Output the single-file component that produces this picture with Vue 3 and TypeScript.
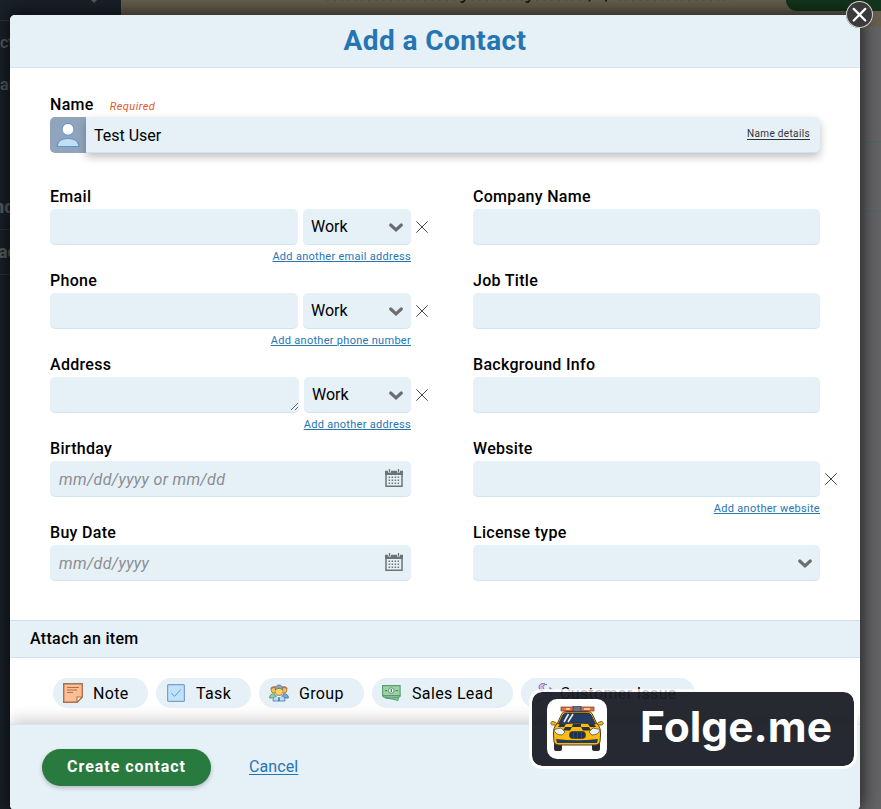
<script setup lang="ts">
interface Field {
  label: string
  kind: 'typed' | 'area' | 'text' | 'date' | 'select'
  placeholder?: string
  link?: string
  removable?: boolean
}

const leftFields: Field[] = [
  { label: 'Email', kind: 'typed', link: 'Add another email address', removable: true },
  { label: 'Phone', kind: 'typed', link: 'Add another phone number', removable: true },
  { label: 'Address', kind: 'area', link: 'Add another address', removable: true },
  { label: 'Birthday', kind: 'date', placeholder: 'mm/dd/yyyy or mm/dd' },
  { label: 'Buy Date', kind: 'date', placeholder: 'mm/dd/yyyy' },
]

const rightFields: Field[] = [
  { label: 'Company Name', kind: 'text' },
  { label: 'Job Title', kind: 'text' },
  { label: 'Background Info', kind: 'text' },
  { label: 'Website', kind: 'text', link: 'Add another website', removable: true },
  { label: 'License type', kind: 'select' },
]

const columns = [leftFields, rightFields]

const chips = [
  { id: 'note', label: 'Note' },
  { id: 'task', label: 'Task' },
  { id: 'group', label: 'Group' },
  { id: 'lead', label: 'Sales Lead' },
  { id: 'issue', label: 'Customer Issue' },
]

const dots = [0, 1, 2, 3].flatMap((c) => [0, 1, 2].map((r) => ({ x: 4 + c * 3, y: 7.5 + r * 3 })))
</script>

<template>
  <div class="page">
    <div class="backdrop">
      <aside class="side">
        <div class="side-top">
          <svg width="10" height="4" viewBox="0 0 10 4"><path d="M2 0L5 3L8 0Z" fill="#55595e" /></svg>
        </div>
        <div class="side-row r1">ct</div>
        <div class="side-row r2">ar</div>
        <div class="side-row r3">nd</div>
        <div class="side-row r4">ac</div>
      </aside>
      <main class="main">
        <div class="banner">
          <svg class="scraps" width="400" height="5" viewBox="0 0 400 5" fill="none" stroke="#15150f" stroke-width="1.7">
            <path d="M79 0L77 2.200L74.500 2M144 0L142 2.200L139.500 2M203.500 0V1.500M220.500 0L219.500 1.500" />
            <path d="M-60 0H70M85 0H138M150 0H200M232 0H345" stroke="#4c493c" stroke-width=".8" stroke-dasharray="3 4" />
          </svg>
          <div class="green"></div>
        </div>
        <div class="line l1"></div>
        <div class="line l2"></div>
      </main>
    </div>

    <section class="modal">
      <header class="head"><h1>Add a Contact</h1></header>
      <div class="body">
        <div class="name-label"><label>Name</label><em>Required</em></div>
        <div class="name-row">
          <div class="avatar">
            <svg width="36" height="36" viewBox="0 0 36 36">
              <circle cx="18" cy="12.300" r="5.900" fill="#fff" stroke="#5e93cd" stroke-width="1" />
              <path d="M7 29.500C7.500 24 12 21.500 18 21.500S28.500 24 29.200 29.500Z" fill="#c3e0f3" stroke="#5e93cd" stroke-width="1.200" />
            </svg>
          </div>
          <div class="name-box"><span>Test User</span><a>Name details</a></div>
        </div>

        <div class="grid">
          <div v-for="(col, ci) in columns" :key="ci" class="col">
            <div v-for="f in col" :key="f.label" class="field">
              <label>{{ f.label }}</label>
              <div class="row">
                <template v-if="f.kind === 'typed' || f.kind === 'area'">
                  <div class="box grow">
                    <svg v-if="f.kind === 'area'" class="grip" width="9" height="9" viewBox="0 0 9 9">
                      <path d="M1 8L8 1M5 8L8 5" stroke="#444" stroke-width=".8" />
                    </svg>
                  </div>
                  <div class="box type" :class="{ narrow: f.kind === 'area' }">
                    <span>Work</span>
                    <svg width="14" height="10" viewBox="0 0 14 10"><path d="M1.700 2L7 6.800L12.300 2" fill="none" stroke="#6b6c6f" stroke-width="3.100" stroke-linecap="round" /></svg>
                  </div>
                </template>
                <div v-else class="box grow" :class="f.kind">
                  <i v-if="f.placeholder">{{ f.placeholder }}</i>
                  <svg v-if="f.kind === 'date'" class="cal" width="18" height="18" viewBox="0 0 18 18">
                    <path d="M1 2.500V17.200H17V2.500" fill="none" stroke="#6d7479" stroke-width="1.500" />
                    <path d="M0 1.800H3V3.600H6V1.800H12V3.600H15V1.800H18V6H0Z" fill="#6d7479" />
                    <path d="M4.500 0V3M13.500 0V3" stroke="#6d7479" stroke-width="1.300" />
                    <rect v-for="(d, i) in dots" :key="i" :x="d.x - .4" :y="d.y" width="1.500" height="1.500" fill="#6d7479" />
                  </svg>
                  <svg v-if="f.kind === 'select'" class="chev" width="14" height="10" viewBox="0 0 14 10"><path d="M1.700 2L7 6.800L12.300 2" fill="none" stroke="#6b6c6f" stroke-width="3.100" stroke-linecap="round" /></svg>
                </div>
                <svg v-if="f.removable" class="remove" width="12" height="12" viewBox="0 0 12 12">
                  <path d="M.3 .3L11.700 11.700M11.700 .3L.3 11.700" stroke="#484848" stroke-width="1" />
                </svg>
              </div>
              <a v-if="f.link">{{ f.link }}</a>
            </div>
          </div>
        </div>
      </div>

      <div class="attach">Attach an item</div>
      <div class="chips">
        <div v-for="c in chips" :key="c.id" class="chip" :class="c.id">
          <svg v-if="c.id === 'note'" width="20" height="20" viewBox="0 0 20 20">
            <path d="M.7 .7H19.300V14L14 19.300H.7Z" fill="#ffbd94" stroke="#a9714f" stroke-width="1.400" />
            <path d="M19.300 14H14V19.300Z" fill="#fff0e6" stroke="#a9714f" stroke-width="1.100" />
            <path d="M4 4.500H16M4 7H14M4 9.500H10" stroke="#a9714f" stroke-width="1.100" />
          </svg>
          <svg v-else-if="c.id === 'task'" width="18" height="18" viewBox="0 0 18 18">
            <rect x=".6" y=".6" width="16.800" height="16.800" rx="1" fill="#bfe2fd" stroke="#7c9fca" stroke-width="1.200" />
            <path d="M4.200 9L7.600 12.300L13.800 5.500" fill="none" stroke="#6f92bd" stroke-width="1" />
          </svg>
          <svg v-else-if="c.id === 'group'" width="20" height="18" viewBox="0 0 20 18">
            <path d="M.6 14C.6 11 2.500 9.700 5.500 9.700L7 14Z" fill="#9bcf9c" stroke="#438b63" stroke-width=".8" />
            <path d="M19.400 14C19.400 11 17.500 9.700 14.500 9.700L13 14Z" fill="#78a8dc" stroke="#48699c" stroke-width=".8" />
            <circle cx="5" cy="6" r="3" fill="#f2c05b" stroke="#b0703f" stroke-width=".8" />
            <circle cx="15" cy="6" r="3" fill="#f2c05b" stroke="#b0703f" stroke-width=".8" />
            <path d="M2 5Q4 1.500 8 4M12 4Q16 1.500 18 5" fill="none" stroke="#b5744b" stroke-width="1.600" />
            <path d="M4 17C4 13 6 11.700 10 11.700S16 13 16 17Z" fill="#b5dffb" stroke="#4473b2" stroke-width=".8" />
            <path d="M8 12L10 15L12 12Z" fill="#fff" /><path d="M10 13V17" stroke="#315d9e" stroke-width="1.300" />
            <circle cx="10" cy="7.500" r="3.800" fill="#ffd65c" stroke="#b98a40" stroke-width=".8" />
            <path d="M6 5.500C6 -.5 14 -.5 14 5.500Q10 3 6 5.500Z" fill="#8fa3b5" stroke="#5d758a" stroke-width=".8" />
          </svg>
          <svg v-else-if="c.id === 'lead'" width="19" height="16" viewBox="0 0 19 16">
            <path d="M3 10L16.500 12L16 15.500L10 14L3 13Z" fill="#8cc79b" stroke="#56936b" stroke-width=".9" />
            <path d="M1 9L18 10V12L10 13L1 12Z" fill="#8cc79b" stroke="#56936b" stroke-width=".8" />
            <rect x=".6" y=".6" width="17.500" height="10" fill="#9bd2a6" stroke="#599671" stroke-width="1.100" />
            <circle cx="9.300" cy="5.600" r="2.800" fill="#f3fff4" stroke="#599671" /><path d="M9.300 4V7.200M3 5.600H5M13.700 5.600H15.700" stroke="#477f5d" stroke-width="1.300" />
          </svg>
          <svg v-else width="20" height="20" viewBox="0 0 20 20" fill="none" stroke="#8863a4" stroke-width="1">
            <path d="M10 .8C6 -.2 3 2 4.500 6L6 8L9 5.500C7 4 8 1.500 12 1.500" fill="#d3bfe3" />
            <path d="M15 7V4.500L17.500 7M7 8L10 10Q14 7 16 10Q17 14 13 15L9 14L2 19" />
          </svg>
          <span>{{ c.label }}</span>
        </div>
      </div>

      <footer class="foot">
        <button>Create contact</button>
        <a>Cancel</a>
      </footer>
    </section>

    <div class="close">
      <svg width="27" height="27" viewBox="0 0 27 27"><path d="M7.700 7.900L19.300 19.500M19.300 7.900L7.700 19.500" stroke="#fff" stroke-width="2.200" stroke-linecap="round" /></svg>
    </div>

    <div class="badge">
      <div class="logo">
        <svg width="54" height="46" viewBox="0 0 54 46">
          <rect x="4" y="34" width="8" height="11" rx="2" fill="#292b31" /><rect x="42" y="34" width="8" height="11" rx="2" fill="#292b31" />
          <rect x="11" y="1" width="33" height="4" fill="#ed6939" stroke="#694037" stroke-width=".7" />
          <path d="M16 3H20M34 3H40" stroke="#ffc5a3" stroke-width="1.800" />
          <rect x="23" y="0" width="8" height="6" fill="#697287" stroke="#303848" stroke-width=".7" />
          <path d="M6 19H2C0 18 .5 15.500 3 15.500Q6 15.500 8 19ZM48 19H52C54 18 53.500 15.500 51 15.500Q48 15.500 46 19Z" fill="#f5b71d" stroke="#654a18" stroke-width=".8" />
          <path d="M7 18L12 7.500Q13 5.500 17 5.500H37Q41 5.500 42 7.500L47 18Q51 21 50.500 29L50 36Q49 39 45 39H9Q5 39 4 36L3.500 29Q3 21 7 18Z" fill="#fdbb0c" stroke="#573f1b" stroke-width="1" />
          <path d="M8.500 18L13 9Q14 7 17 7H37Q40 7 41 9L45.500 18Q27 16 8.500 18Z" fill="#243c62" stroke="#1d2634" stroke-width=".8" />
          <path d="M14 16L18.500 8M18 16L23 8" stroke="#e9f0f5" stroke-width="1.600" />
          <path d="M10 18H16L14 21H8ZM23 17.500H31V21H22ZM38 18H44L46 21H40ZM15 21H22L20 24.500H13ZM31 21H39L41 24.500H33Z" fill="#293040" />
          <path d="M4 23.500L11 22L15 26L12 29Q5 29 4 23.500ZM50 23.500L43 22L39 26L42 29Q49 29 50 23.500Z" fill="#edf1f3" stroke="#5d553e" stroke-width=".8" />
          <rect x="19.500" y="25.500" width="16" height="7" rx="3" fill="#1c3155" stroke="#4d4128" stroke-width=".8" />
          <path d="M23.500 26V32M27.500 26V32M31.500 26V32" stroke="#40567e" stroke-width=".7" />
          <path d="M6 33Q27 35.500 48 33L47 37H7Z" fill="#203b64" /><path d="M8 38.500H46" stroke="#a97a19" />
        </svg>
      </div>
      <svg class="brand" width="196" height="60" viewBox="0 0 196 60">
        <text x="1" y="43" textLength="192" lengthAdjust="spacingAndGlyphs">Folge.me</text>
      </svg>
    </div>
  </div>
</template>

<style>
body { margin: 0; overflow: hidden; }
</style>

<style scoped>
* { box-sizing: border-box; }
.page { position: relative; width: 881px; height: 809px; overflow: hidden; font-family: Roboto, "Liberation Sans", sans-serif; color: #000; background: #646466; }
.backdrop { position: absolute; inset: 0; display: flex; }
.side { flex: 0 0 121px; background: #1a2129; color: #5d6063; font-size: 16px; font-weight: 500; }
.side-top { height: 21px; padding-left: 89px; border-bottom: 1px solid #30343a; }
.side-top svg { display: block; }
.side-row { line-height: 20px; }
.r1 { padding-top: 12px; height: 42px; }
.r2 { padding-top: 12px; height: 42px; }
.r3 { padding-top: 92px; height: 125px; border-bottom: 1px solid #30343a; font-weight: 800; font-size: 18px; text-indent: -6px; }
.r4 { padding-top: 12px; height: 45px; border-bottom: 1px solid #30343a; font-weight: 800; font-size: 18px; text-indent: -2px; }
.main { flex: 1; min-width: 0; }
.banner { display: flex; justify-content: space-between; height: 27px; background: #665f4e; padding-left: 265px; border-bottom: 1px solid #6b604a; }
.scraps { display: block; flex: none; overflow: visible; }
.green { flex: none; width: 96px; height: 11px; background: #12351c; border-radius: 0 0 0 16px; }
.line { height: 2px; background: #596569; }
.l1 { margin-top: 114px; }
.l2 { margin-top: 67px; }
.modal { position: absolute; left: 10px; top: 15px; width: 850px; height: 795px; display: flex; flex-direction: column; background: #fff; border-radius: 5px; overflow: hidden; box-shadow: 0 0 18px 2px rgba(0, 0, 0, .7); }
.head { height: 53px; background: #e5f0f7; border-bottom: 1px solid #d6e5ef; }
h1 { margin: 0; text-align: center; font-size: 28px; line-height: 51px; font-weight: 700; letter-spacing: .4px; color: #2675b3; }
.body { height: 552px; padding: 26px 0 0 40px; }
label { font-size: 16px; font-weight: 500; letter-spacing: .3px; line-height: 22px; }
.name-label { height: 23px; display: flex; align-items: baseline; gap: 16px; }
.name-label em { font-size: 11px; color: #e1571f; letter-spacing: .45px; }
.name-row { display: flex; width: 770px; height: 36px; }
.avatar { width: 36px; background: #90a4bb; border-radius: 5px 0 0 5px; }
.avatar svg { display: block; }
.name-box { flex: 1; display: flex; justify-content: space-between; align-items: center; padding: 0 10px 0 8px; background: #e5f0f7; border-bottom: 1px solid #cfe2ee; border-radius: 0 5px 5px 0; box-shadow: 0 4px 9px rgba(0, 0, 0, .25); font-size: 16px; }
.name-box span { padding-top: 2px; }
.name-box a { font-size: 10px; letter-spacing: .35px; color: #333; text-decoration: underline; text-underline-offset: 2px; padding-bottom: 2px; }
.grid { display: grid; grid-template-columns: 361px 347px; column-gap: 62px; margin-top: 33px; }
.field { height: 84px; display: flex; flex-direction: column; }
.field label { height: 23px; line-height: 21px; }
.row { position: relative; display: flex; gap: 5px; height: 36px; }
.box { display: flex; align-items: center; background: #e5f0f7; border-radius: 5px; border-bottom: 1px solid #d0e4f1; }
.grow { flex: 1; }
.box.type { width: 108px; justify-content: space-between; padding: 0 8px; font-size: 16px; }
.box.type.narrow { width: 107px; }
.type svg { margin-top: 2px; }
.grip { margin: 24px 0 0 auto; }
.date { justify-content: space-between; padding: 0 8px; }
.date i { padding: 2px 0 0 1px; font-size: 16px; letter-spacing: .33px; color: #8b8e90; }
.cal { margin-top: -1px; }
.chev { margin: 2px 8px 0 auto; }
.remove { position: absolute; left: calc(100% + 5px); top: 12px; }
.field > a { align-self: flex-end; margin-top: 5px; font-size: 11px; line-height: 14px; letter-spacing: .29px; color: #2675b3; text-decoration: underline; text-underline-offset: 1px; }
.attach { height: 38px; padding-left: 20px; line-height: 35px; font-size: 16px; font-weight: 500; letter-spacing: .3px; background: #e5f0f7; border-top: 1px solid #d0e2ed; border-bottom: 1px solid #d0e2ed; }
.chips { display: flex; gap: 8px; height: 66px; padding: 20px 0 0 43px; }
.chip { display: flex; align-items: center; height: 30px; border-radius: 15px; background: #e5f0f7; font-size: 16px; letter-spacing: .35px; white-space: nowrap; padding-left: 10px; }
.chip span { margin-left: 10px; }
.note { width: 95px; }
.task { width: 95px; padding-left: 11px; }
.task span { margin-left: 11px; }
.group { width: 105px; }
.group span { margin-left: 10px; }
.lead { width: 141px; }
.lead span { margin-left: 11px; }
.issue { width: 174px; padding-left: 14px; }
.issue span { margin-left: 5px; }
.foot { position: relative; flex: 1; display: flex; align-items: flex-start; padding: 24px 0 0 32px; background: #e5f0f7; border-top: 1px solid #d5e4ee; box-shadow: 0 -3px 16px rgba(0, 0, 0, .22); }
button { width: 169px; height: 37px; padding: 0 0 2px; border: 0; border-radius: 19px; background: #297a3e; color: #fff; font: 700 16px Roboto, sans-serif; letter-spacing: .95px; box-shadow: 0 2px 4px rgba(0, 0, 0, .22); }
.foot > a { margin: 8px 0 0 38px; font-size: 16px; line-height: 19px; letter-spacing: .1px; color: #2675b3; text-decoration: underline; text-underline-offset: 2px; }
.close { position: absolute; left: 846px; top: 1px; width: 27px; height: 27px; border-radius: 50%; background: #3b3b3c; box-shadow: inset 0 0 0 1px #d0d0d0; }
.close svg { display: block; }
.badge { position: absolute; left: 529px; top: 689px; width: 328px; height: 80px; display: flex; align-items: flex-start; padding: 7px 0 0 15px; border: 3px solid #fff; border-top-color: rgba(255, 255, 255, .75); border-radius: 13px; background: rgba(27, 29, 38, .95); background-clip: padding-box; }
.logo { flex: none; width: 60px; height: 60px; display: grid; place-items: center; border-radius: 10px; background: #fff; }
.brand { margin-left: 32px; }
.brand text { font: 700 42px Inter, sans-serif; fill: #fff; }
</style>
